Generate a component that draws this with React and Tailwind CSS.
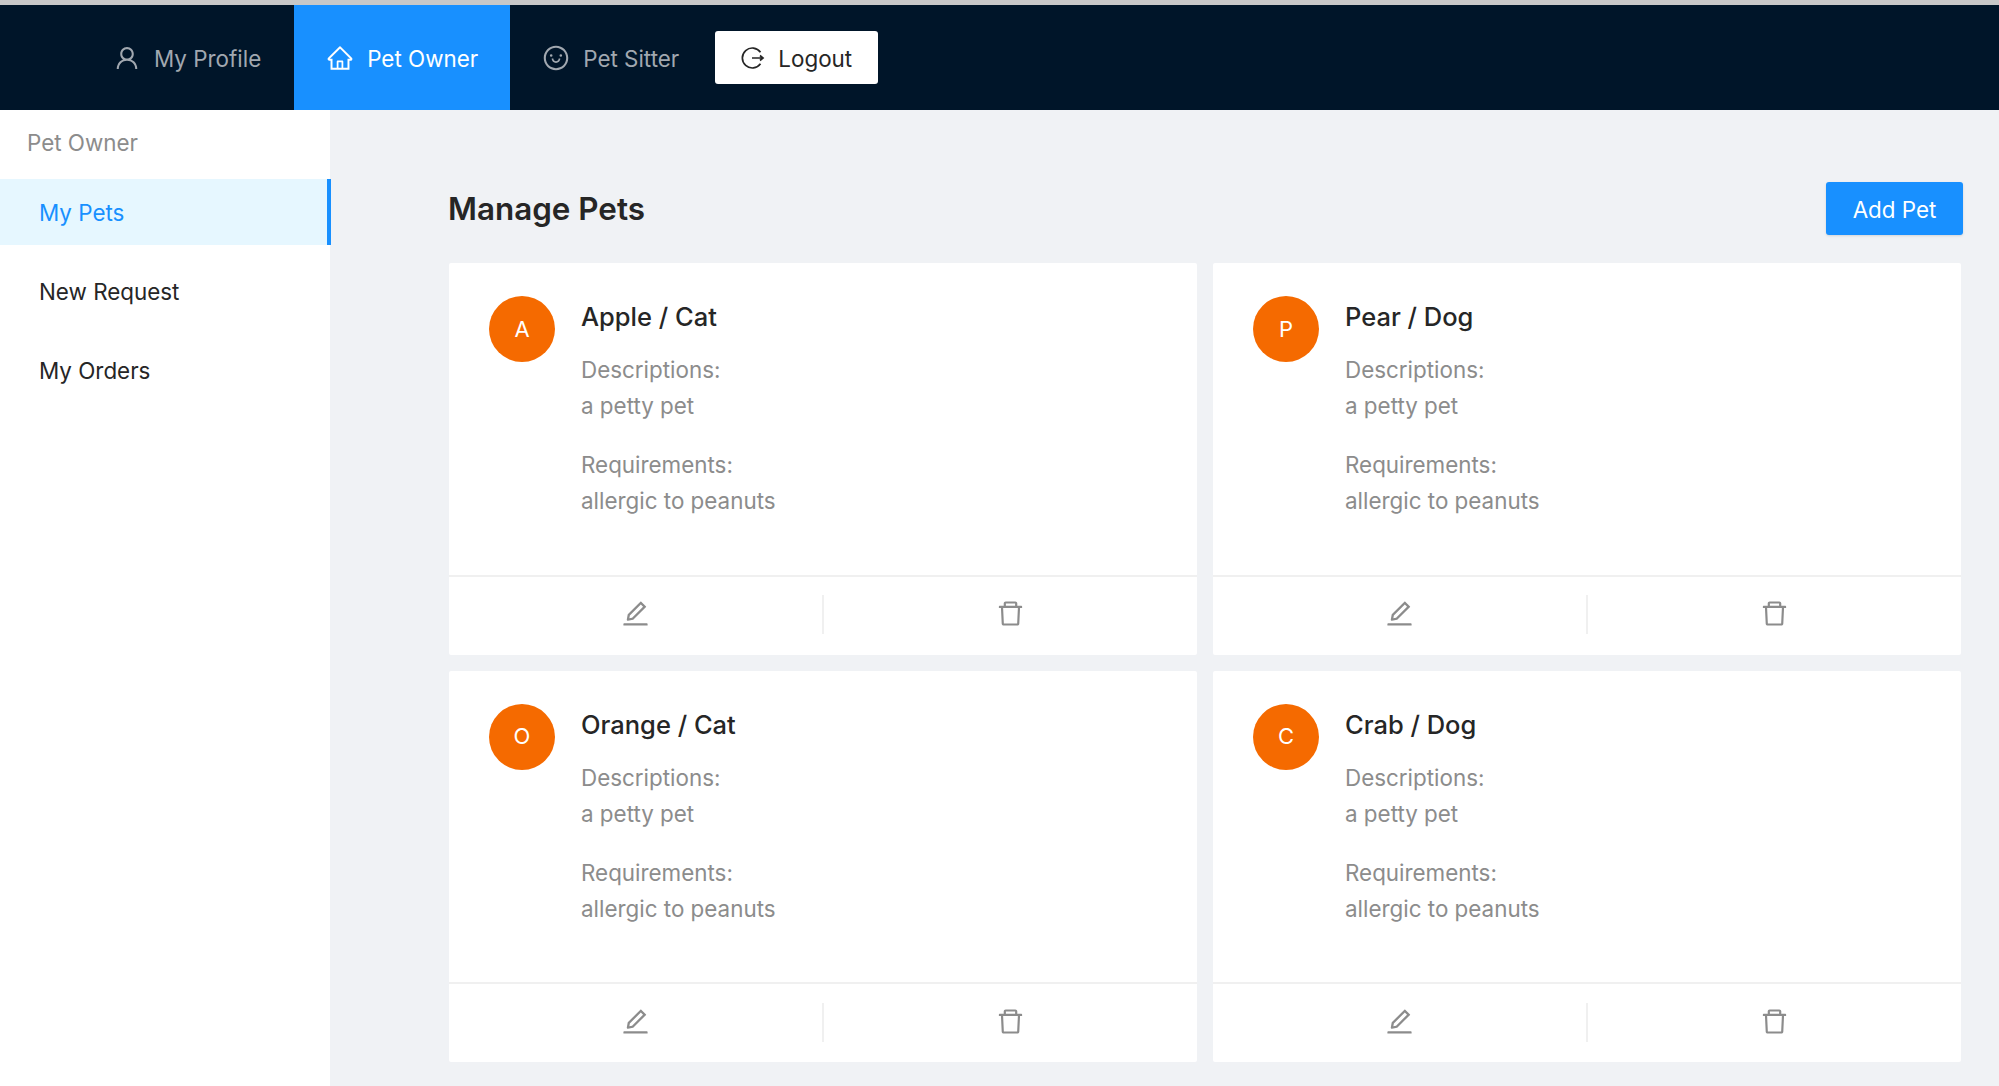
import React from "react";
import { AiOutlineUser, AiOutlineHome, AiOutlineSmile, AiOutlineEdit, AiOutlineDelete } from "react-icons/ai";

const pets = [
  { letter: "A", title: "Apple / Cat" },
  { letter: "P", title: "Pear / Dog" },
  { letter: "O", title: "Orange / Cat" },
  { letter: "C", title: "Crab / Dog" },
];

const LogoutIcon = () => (
  <svg viewBox="0 0 24 24" className="w-[24px] h-[24px]" fill="none" stroke="currentColor" strokeWidth="1.7">
    <path d="M19.5 6.2A10 10 0 1 0 19.5 17.8" />
    <path d="M11 12h11M19 9.5l3 2.5-3 2.5" />
  </svg>
);

const NavItem = ({ icon, label, active }) => (
  <div className={`h-full px-[32px] flex items-center gap-[13px] text-[22.4px] ${active ? "bg-[#1890ff] text-white" : "text-[#a1a8b0]"}`}>
    <span className="text-[28px]">{icon}</span>
    <span className="pt-[2px]">{label}</span>
  </div>
);

const PetCard = ({ letter, title }) => (
  <div className="bg-white rounded-[2px] flex flex-col h-[391.5px]">
    <div className="flex-1 flex pl-[40px] pt-[33px] gap-[26px]">
      <div className="w-[66px] h-[66px] rounded-full bg-[#f56a00] text-white text-[22px] flex items-center justify-center shrink-0">
        {letter}
      </div>
      <div>
        <div className="text-[25.5px] leading-[44px] -mt-[1px] text-[#262626] font-medium">{title}</div>
        <div className="text-[22.4px] leading-[36px] text-[#8c8c8c] mt-[13px]">
          <div>Descriptions:</div>
          <div>a petty pet</div>
          <div className="mt-[23px]">Requirements:</div>
          <div>allergic to peanuts</div>
        </div>
      </div>
    </div>
    <div className="h-[80px] border-t-2 border-[#f0f0f0] flex items-center text-[#8c8c8c] text-[31px] pb-[2px]">
      <div className="flex-1 h-[39px] flex items-center justify-center border-r-2 border-[#f0f0f0]">
        <span className="-mt-[2px]"><AiOutlineEdit /></span>
      </div>
      <div className="flex-1 h-[39px] flex items-center justify-center">
        <span className="-mt-[2px]"><AiOutlineDelete /></span>
      </div>
    </div>
  </div>
);

export default function App() {
  return (
    <div className="h-[1086px] w-full overflow-hidden flex flex-col bg-[#f0f2f5] font-['Inter',sans-serif]">
      <div className="h-[5px] bg-[#c8c8c8]" />
      <header className="h-[105px] bg-[#001529] flex items-center pl-[81px]">
        <div className="h-full mr-[1px]">
          <NavItem icon={<AiOutlineUser />} label="My Profile" />
        </div>
        <NavItem icon={<AiOutlineHome />} label="Pet Owner" active />
        <NavItem icon={<AiOutlineSmile />} label="Pet Sitter" />
        <button className="h-[53px] w-[163px] ml-[4px] bg-white rounded-[3px] text-[#262626] text-[22.4px] flex items-center justify-center gap-[13px]">
          <LogoutIcon />
          <span className="pt-[2px]">Logout</span>
        </button>
      </header>
      <div className="flex-1 flex min-h-0">
        <aside className="w-[330px] bg-white text-[22.4px] text-[#262626]">
          <div className="h-[69px] pl-[27px] pb-[4px] flex items-center text-[#8c8c8c]">Pet Owner</div>
          <div className="h-[66px] pl-[39px] pt-[2px] flex items-center bg-[#e6f7ff] text-[#1890ff] border-r-4 border-[#1890ff] w-[331px]">My Pets</div>
          <div className="h-[66px] pl-[39px] pt-[2px] flex items-center mt-[13px]">New Request</div>
          <div className="h-[66px] pl-[39px] pt-[2px] flex items-center mt-[13px]">My Orders</div>
        </aside>
        <main className="flex-1 pl-[119px] pr-[36px] pt-[72px]">
          <div className="flex items-center justify-between h-[53px] mb-[28px]">
            <h1 className="text-[31.4px] font-semibold text-[#262626] pt-[2px] -ml-[1px]">Manage Pets</h1>
            <button className="h-[53px] w-[137px] bg-[#1890ff] text-white text-[22.4px] rounded-[3px] shadow-sm pt-[2px]">Add Pet</button>
          </div>
          <div className="grid grid-cols-2 gap-x-[16px] gap-y-[16px] pr-[2px]">
            {pets.map((p) => (
              <PetCard key={p.letter} {...p} />
            ))}
          </div>
        </main>
      </div>
    </div>
  );
}
